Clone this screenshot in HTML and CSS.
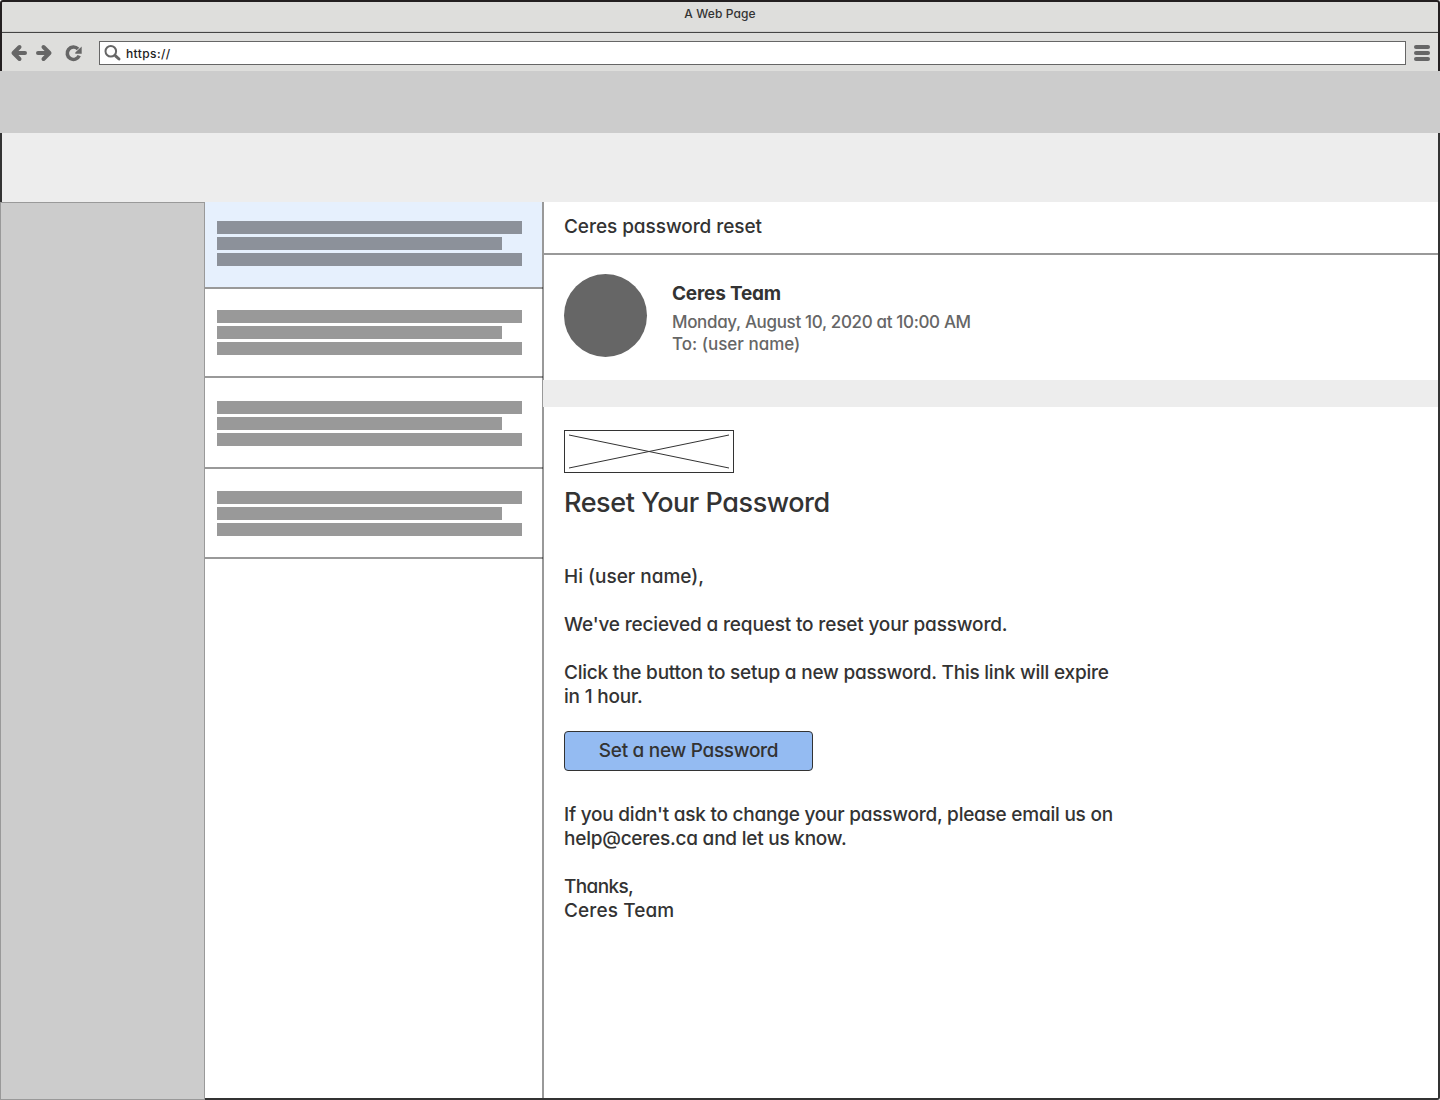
FILE: index.html
```html
<!DOCTYPE html>
<html lang="en">
<head>
<meta charset="utf-8">
<title>A Web Page</title>
<link rel="stylesheet" href="styles.css">
</head>
<body>
<div class="window">
  <header class="chrome">
    <div class="titlebar"><span class="t-title">A Web Page</span></div>
    <div class="toolbar">
      <svg class="nav-icons" width="97" height="38" viewBox="2 33 97 38" fill="none" stroke="#666" stroke-width="4" stroke-linecap="round" stroke-linejoin="round">
        <path d="M19.5 47 13.5 53 19.5 59M14 53H25"/>
        <path d="M43.500 47 49.500 53 43.500 59M49 53H38"/>
        <path stroke-linecap="butt" stroke-width="3.600" d="M78 49A6.200 6.200 0 1 0 79.200 55.600"/>
        <path fill="#666" stroke="none" d="M81.700 46.500V53.800H75.300V52.500Z"/>
      </svg>
      <div class="address">
        <svg width="20" height="22" viewBox="102 42 20 22" fill="none" stroke="#666" stroke-linecap="round">
          <circle cx="110.800" cy="51.200" r="5.300" stroke-width="2"/>
          <path stroke-width="3" d="M115.500 55.800 119 59"/>
        </svg>
        <span class="t-url">https://</span>
      </div>
      <div class="menu"><i></i><i></i><i></i></div>
    </div>
  </header>
  <div class="banner"></div>
  <div class="ribbon"></div>
  <div class="workspace">
    <aside class="sidebar"></aside>
    <main class="mail">
      <section class="list">
        <div class="item selected"><i></i><i></i><i></i></div>
        <div class="item"><i></i><i></i><i></i></div>
        <div class="item third"><i></i><i></i><i></i></div>
        <div class="item"><i></i><i></i><i></i></div>
      </section>
      <article class="message">
        <h1 class="subject"><span class="t-subject">Ceres password reset</span></h1>
        <div class="sender">
          <div class="avatar"></div>
          <div class="meta">
            <div class="name"><span class="t-name">Ceres Team</span></div>
            <div><span class="t-date">Monday, August 10, 2020 at 10:00 AM</span></div>
            <div><span class="t-to">To: (user name)</span></div>
          </div>
        </div>
        <div class="separator"></div>
        <div class="content">
          <svg class="logo" width="170" height="43" viewBox="0 0 170 43" fill="none" stroke="#333">
            <rect x=".5" y=".5" width="169" height="42"/>
            <path d="M5 5 165 38M5 38 165 5"/>
          </svg>
          <h2 class="heading"><span class="t-heading">Reset Your Password</span></h2>
          <p><span class="t-hi">Hi (user name),</span></p>
          <p><span class="t-request">We've recieved a request to reset your password.</span></p>
          <p><span class="t-click">Click the button to setup a new password. This link will expire</span><br><span class="t-hour">in 1 hour.</span></p>
          <button class="action"><span class="t-button">Set a new Password</span></button>
          <p><span class="t-ask">If you didn't ask to change your password, please email us on</span><br><span class="t-help">help@ceres.ca and let us know.</span></p>
          <p><span class="t-thanks">Thanks,</span><br><span class="t-team">Ceres Team</span></p>
        </div>
      </article>
    </main>
  </div>
</div>
</body>
</html>
```
FILE: styles.css
```css
* { box-sizing: border-box; }
body {
  margin: 0;
  background: #fff;
  color: #333;
  font: 500 19px/24px Inter, "Liberation Sans", sans-serif;
  font-feature-settings: "cv11" 1;
}
h1, h2, p { margin: 0; font-weight: inherit; }
span { white-space: nowrap; }
.window { display: flex; flex-direction: column; width: 1440px; height: 1100px; overflow: hidden; }
.chrome { height: 71px; border: 2px solid #231f20; border-bottom: 0; border-radius: 3px 3px 0 0; background: #dededc; }
.titlebar { height: 31px; border-bottom: 1px solid #444; box-shadow: inset 0 -1px #cfcfcd; text-align: center; font-size: 12px; line-height: 23px; }
.toolbar { display: flex; height: 38px; }
.nav-icons { flex: none; }
.address { display: flex; align-items: center; width: 1307px; height: 24px; margin-top: 8px; padding-left: 2px; border: 1px solid #666; background: #fff; color: #222; font-size: 12px; }
.address span { margin-left: 4px; padding-top: 1px; }
.menu { display: flex; flex-direction: column; gap: 2px; margin: 12px 0 0 8px; }
.menu i { width: 16px; height: 4px; border-radius: 2px; background: #666; }
.banner { height: 62px; background: #ccc; }
.ribbon { height: 69px; border: solid #333; border-width: 0 2px; background: #ededed; }
.workspace { display: flex; height: 898px; }
.sidebar { width: 205px; border: 1px solid #999; background: #ccc; }
.mail { display: flex; flex: 1; border: solid #333; border-width: 0 2px 2px 0; border-bottom-right-radius: 3px; }
.list { width: 339px; border-right: 2px solid #999; }
.item { display: flex; flex-direction: column; gap: 2.8px; height: 89px; margin-right: -1px; padding: 21px 0 0 12px; border-bottom: 2px solid rgba(0, 0, 0, .4); }
.item.selected { height: 87px; padding-top: 19px; background: linear-gradient(#e6f0fd, #e6f0fd) 0 0 / 337px 85px no-repeat; }
.item.third { height: 91px; padding-top: 23px; }
.item:last-child { height: 90px; padding-top: 22px; }
.item i { width: 305px; height: 13px; background: #999; }
.item i:nth-child(2) { width: 285px; }
.item.selected i { background: #8c919a; }
.message { flex: 1; }
.subject { height: 53px; margin-left: -1px; padding: 13px 0 0 21px; border-bottom: 2px solid #999; font-size: 19px; }
.sender { display: flex; gap: 25px; height: 125px; padding: 19px 0 0 20px; }
.avatar { width: 83px; height: 83px; border-radius: 50%; background: #666; }
.meta { padding-top: 8px; color: #666; font-size: 17px; line-height: 22px; }
.name { height: 29px; color: #333; font-size: 19px; font-weight: 700; line-height: 24px; }
.separator { height: 27px; margin-left: -1px; background: #ededed; }
.content { padding: 23px 0 0 20px; }
.logo { display: block; }
.heading { height: 92px; padding-top: 14px; font-size: 27px; line-height: 32px; }
.content p { margin-bottom: 24px; }
.action { display: block; width: 249px; height: 40px; margin: -2px 0 32px; padding: 0; border: 1px solid #333; border-radius: 4px; background: #94bbf2; color: #333; font: inherit; font-feature-settings: inherit; line-height: 36px; }

/* Tracking per line of text */
.t-title { letter-spacing: .1px; }
.t-url { letter-spacing: .4px; }
.t-subject { letter-spacing: -.06px; }
.t-name { letter-spacing: -.2px; }
.t-date { letter-spacing: -.34px; }
.t-heading { letter-spacing: -.44px; }
.t-request { letter-spacing: -.16px; }
.t-click { letter-spacing: -.22px; }
.t-hour { letter-spacing: -.2px; }
.t-button { letter-spacing: -.3px; }
.t-ask { letter-spacing: -.235px; }
.t-help { letter-spacing: -.23px; }
.t-thanks { letter-spacing: -.65px; }
.t-team { letter-spacing: .1px; }
```
